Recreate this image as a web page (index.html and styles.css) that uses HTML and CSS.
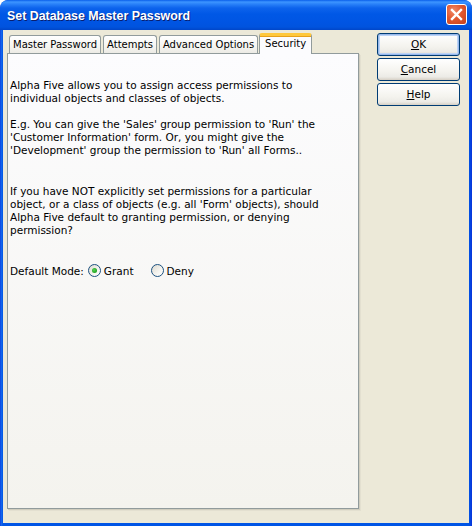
FILE: index.html
```html
<!DOCTYPE html>
<html>
<head>
<meta charset="utf-8">
<link rel="stylesheet" href="styles.css">
</head>
<body>
<div class="window">
  <div class="titlebar">
    <span class="title">Set Database Master Password</span>
    <div class="close">
      <svg width="13" height="13" viewBox="0 0 13 13"><path d="M2 2 L11 11 M11 2 L2 11" stroke="#fff" stroke-width="2.4" stroke-linecap="square" fill="none"/></svg>
    </div>
  </div>
  <div class="client">
    <div class="tabarea">
      <div class="tabs">
        <div class="tab">Master Password</div>
        <div class="tab">Attempts</div>
        <div class="tab">Advanced Options</div>
        <div class="tab active">Security</div>
      </div>
      <div class="panel">
        <p class="p1">Alpha Five allows you to assign access permissions to<br>individual objects and classes of objects.</p>
        <p class="p2">E.g. You can give the 'Sales' group permission to 'Run' the<br>'Customer Information' form. Or, you might give the<br>'Development' group the permission to 'Run' all Forms..</p>
        <p class="p3">If you have NOT explicitly set permissions for a particular<br>object, or a class of objects (e.g. all 'Form' objects), should<br>Alpha Five default to granting permission, or denying<br>permission?</p>
        <div class="mode">
          <span class="mode-label">Default Mode:</span>
          <span class="radio checked"><span class="dot"></span></span><span class="rlabel grant">Grant</span>
          <span class="radio"></span><span class="rlabel">Deny</span>
        </div>
      </div>
    </div>
    <div class="buttons">
      <div class="btn default"><u>O</u>K</div>
      <div class="btn"><u>C</u>ancel</div>
      <div class="btn"><u>H</u>elp</div>
    </div>
  </div>
</div>
</body>
</html>
```
FILE: styles.css
```css
html, body {
  margin: 0;
  padding: 0;
  background: #ffffff;
}
body {
  font-family: "DejaVu Sans", Tahoma, sans-serif;
  font-size: 10.5px;
  color: #000;
}
.window {
  width: 472px;
  height: 526px;
  box-sizing: border-box;
  border-radius: 8px 8px 0 0;
  display: flex;
  flex-direction: column;
  overflow: hidden;
  background: linear-gradient(to right, #0831D9 0px, #166AEE 1px, #0055E5 3px, #0055E5 469px, #0831D9 472px);
}
.titlebar {
  height: 30px;
  flex: none;
  display: flex;
  align-items: center;
  justify-content: space-between;
  padding: 0 5px 0 7px;
  background: linear-gradient(to bottom, #0A5FEA 0px, #3D95FF 2px, #2A82F9 4px, #0D63EC 8px, #0058E6 14px, #0055E3 22px, #0053DE 27px, #0046C8 30px);
  border-radius: 8px 8px 0 0;
}
.title {
  color: #fff;
  font-family: "Liberation Sans", Arial, sans-serif;
  font-weight: bold;
  font-size: 12.4px;
  text-shadow: 1px 1px 0 #0A1E6E;
  margin-top: 1px;
}
.close {
  width: 21px;
  height: 21px;
  box-sizing: border-box;
  border: 1px solid #fff;
  border-radius: 3px;
  background: radial-gradient(circle at 35% 30%, #F08A6A 0%, #E2582F 45%, #C4401A 100%);
  display: flex;
  align-items: center;
  justify-content: center;
  margin-top: -1px;
}
.client {
  flex: 1;
  margin: 0 3px 3px 3px;
  background: #ECE9D8;
  display: flex;
  align-items: flex-start;
  padding: 3px 0 0 4px;
}
.tabarea {
  width: 352px;
  display: flex;
  flex-direction: column;
}
.tabs {
  display: flex;
  align-items: flex-end;
  height: 20px;
  padding-left: 2px;
  gap: 2px;
  position: relative;
  z-index: 1;
  font-size: 10px;
}
.tab {
  height: 18px;
  box-sizing: border-box;
  border: 1px solid #919B9C;
  border-bottom: none;
  border-radius: 3px 3px 0 0;
  background: linear-gradient(to bottom, #FFFFFF 0%, #F7F7F4 50%, #ECEBE5 100%);
  padding: 2px 3px 0 3px;
  line-height: 14px;
  white-space: nowrap;
}
.tab.active {
  height: 21px;
  margin-bottom: -1px;
  margin-left: -1px;
  border-top: 3px solid #FFC83C;
  box-shadow: inset 0 1px 0 #E6A01B;
  background: #FCFCFE;
  padding: 1px 5px 0 5px;
  border-radius: 3px 3px 0 0;
}
.panel {
  height: 456px;
  box-sizing: border-box;
  border: 1px solid #919B9C;
  box-shadow: 1px 1px 0 #D0CDBE, 2px 2px 0 #E3E0D0;
  background: linear-gradient(to bottom, #FCFCFE 0%, #F4F3EE 100%);
  padding: 25px 0 0 2px;
}
.panel p {
  margin: 0;
  line-height: 13px;
  white-space: nowrap;
}
.p2 { margin-top: 13px !important; }
.p3 { margin-top: 28px !important; }
.mode {
  margin-top: 26px;
  display: flex;
  align-items: center;
  height: 15px;
}
.mode-label { margin-right: 4px; }
.radio {
  width: 13px;
  height: 13px;
  box-sizing: border-box;
  border: 1px solid #1C5180;
  border-radius: 50%;
  background: linear-gradient(135deg, #DCD9CF 0%, #F6F5F0 60%, #FFFFFF 100%);
  display: inline-flex;
  align-items: center;
  justify-content: center;
  margin-right: 3px;
}
.dot {
  width: 5px;
  height: 5px;
  border-radius: 50%;
  background: radial-gradient(circle at 40% 40%, #55D455 0%, #21A121 70%);
}
.rlabel.grant { margin-right: 17px; }
.buttons {
  margin-left: 18px;
  display: flex;
  flex-direction: column;
  gap: 2px;
}
.btn {
  width: 83px;
  height: 23px;
  box-sizing: border-box;
  border: 1px solid #003C74;
  border-radius: 3px;
  background: linear-gradient(to bottom, #FFFFFF 0%, #F4F3EE 60%, #ECEBE6 85%, #D6D0C5 100%);
  display: flex;
  align-items: center;
  justify-content: center;
  line-height: 13px;
}
.btn.default {
  box-shadow: inset 0 0 0 1px #98B8EA, inset 0 0 0 2px #BCD4F6;
}
.btn u { text-decoration: underline; }
```
